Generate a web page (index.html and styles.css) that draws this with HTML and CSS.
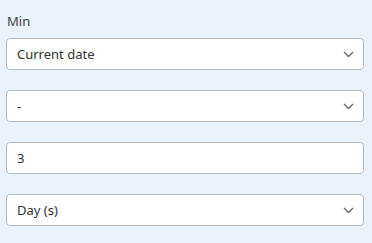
FILE: index.html
```html
<!DOCTYPE html>
<html lang="en">
<head>
    <meta charset="UTF-8">
    <title>Min</title>
    <link rel="stylesheet" href="styles.css">
</head>
<body>
    <div class="panel">
        <label class="field-label">Min</label>
        <div class="field select">
            <span>Current date</span>
            <svg class="chevron" width="11" height="7" viewBox="0 0 11 7"><path d="M1 1l4.5 4.5L10 1" fill="none" stroke="#666" stroke-width="1.3"/></svg>
        </div>
        <div class="field select">
            <span>-</span>
            <svg class="chevron" width="11" height="7" viewBox="0 0 11 7"><path d="M1 1l4.5 4.5L10 1" fill="none" stroke="#666" stroke-width="1.3"/></svg>
        </div>
        <div class="field">
            <span>3</span>
        </div>
        <div class="field select">
            <span>Day (s)</span>
            <svg class="chevron" width="11" height="7" viewBox="0 0 11 7"><path d="M1 1l4.5 4.5L10 1" fill="none" stroke="#666" stroke-width="1.3"/></svg>
        </div>
    </div>
</body>
</html>
```

FILE: styles.css
```css
/* Panel de rango de fechas */
body { margin: 0; font-family: "Segoe UI", "Noto Sans", sans-serif; font-size: 13px; color: #333; background-color: #eaf2fc; }
.panel { display: flex; flex-direction: column; gap: 20px; padding: 12px 8px 12px 6px; height: 243px; box-sizing: border-box; }
.field-label { display: block; line-height: 18px; margin: 0 0 -12px 1px; color: #444; }
.field { display: flex; align-items: center; justify-content: space-between; height: 32px; box-sizing: border-box; padding: 0 9px 0 10px; background-color: #fff; border: 1px solid #b3bac4; border-radius: 4px; }
.chevron { flex-shrink: 0; margin-right: 0; }
```
